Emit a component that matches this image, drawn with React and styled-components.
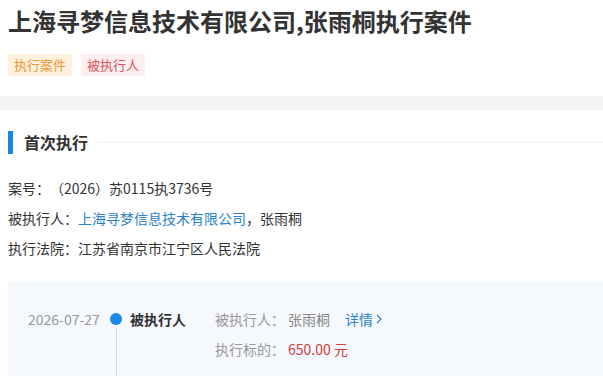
import React from "react";
import styled, { createGlobalStyle } from "styled-components";

const GlobalStyle = createGlobalStyle`
  body {
    margin: 0;
    background: #fff;
    font-family: "Noto Sans CJK SC", "Noto Sans", sans-serif;
    color: #333;
    text-spacing-trim: space-all;
  }
`;

const Header = styled.div`
  padding: 4px 0 20px 8px;
`;

const Title = styled.h1`
  margin: 0;
  font-size: 24px;
  line-height: 34px;
  font-weight: 700;
  color: #333;
`;

const Tags = styled.div`
  display: flex;
  gap: 9px;
  margin-top: 16px;
`;

const Tag = styled.span`
  display: inline-block;
  padding: 0 6px;
  height: 22px;
  line-height: 22px;
  font-size: 13px;
  border-radius: 2px;
  background: ${(p) => (p.$tone === "orange" ? "#fff2de" : "#fdeef0")};
  color: ${(p) => (p.$tone === "orange" ? "#ee9534" : "#df5059")};
`;

const Band = styled.div`
  height: 14px;
  background: #f5f5f5;
`;

const Section = styled.div`
  padding: 20px 0 0 8px;
`;

const SectionHead = styled.div`
  display: flex;
  align-items: center;
  height: 24px;
`;

const Bar = styled.span`
  width: 5px;
  height: 23px;
  background: #1a87e3;
  margin-right: 11px;
`;

const SectionTitle = styled.h2`
  margin: 0;
  font-size: 16px;
  font-weight: 700;
  color: #333;
  white-space: nowrap;
`;

const Rule = styled.span`
  flex: 1;
  height: 1px;
  background: #ececec;
  margin-left: 10px;
`;

const Info = styled.div`
  margin-top: 19px;
`;

const InfoRow = styled.div`
  font-size: 14px;
  line-height: 30px;
  color: #333;
`;

const Link = styled.a`
  color: #2a7fcf;
  text-decoration: none;
`;

const Timeline = styled.div`
  margin-top: 19px;
  background: #f5f8fc;
  padding: 22px 0 0 20px;
  height: 72px;
  display: flex;
  font-size: 14px;
  line-height: 30px;
`;

const Date = styled.div`
  color: #999;
  width: 82px;
`;

const Axis = styled.div`
  position: relative;
  width: 12px;
  margin-right: 8px;

  &::before {
    content: "";
    position: absolute;
    left: 0;
    top: 9px;
    width: 12px;
    height: 12px;
    border-radius: 50%;
    background: #1a87e6;
  }

  &::after {
    content: "";
    position: absolute;
    left: 5.5px;
    top: 24px;
    bottom: 0;
    width: 1px;
    background: #d8dce2;
  }
`;

const EventName = styled.div`
  font-weight: 700;
  color: #333;
  width: 85px;
`;

const Details = styled.div`
  color: #999;
`;

const DetailRow = styled.div`
  display: flex;
`;

const Label = styled.span`
  width: 73px;
`;

const Value = styled.span`
  color: ${(p) => (p.$red ? "#d8383f" : "#888")};
`;

const More = styled.a`
  color: #2a7fcf;
  margin-left: 15px;
  text-decoration: none;
  display: inline-flex;
  align-items: center;
  gap: 2px;
`;

export default function App() {
  return (
    <>
      <GlobalStyle />
      <Header>
        <Title>上海寻梦信息技术有限公司,张雨桐执行案件</Title>
        <Tags>
          <Tag $tone="orange">执行案件</Tag>
          <Tag $tone="red">被执行人</Tag>
        </Tags>
      </Header>
      <Band />
      <Section>
        <SectionHead>
          <Bar />
          <SectionTitle>首次执行</SectionTitle>
          <Rule />
        </SectionHead>
        <Info>
          <InfoRow>案号：（2026）苏0115执3736号</InfoRow>
          <InfoRow>
            被执行人：<Link href="#">上海寻梦信息技术有限公司</Link>，张雨桐
          </InfoRow>
          <InfoRow>执行法院：江苏省南京市江宁区人民法院</InfoRow>
        </Info>
        <Timeline>
          <Date>2026-07-27</Date>
          <Axis />
          <EventName>被执行人</EventName>
          <Details>
            <DetailRow>
              <Label>被执行人：</Label>
              <Value>张雨桐</Value>
              <More href="#">
                详情
                <svg width="8" height="10" viewBox="0 0 8 10">
                  <path d="M2 1l4 4-4 4" fill="none" stroke="#2a7fcf" strokeWidth="1.2" />
                </svg>
              </More>
            </DetailRow>
            <DetailRow>
              <Label>执行标的：</Label>
              <Value $red>650.00 元</Value>
            </DetailRow>
          </Details>
        </Timeline>
      </Section>
    </>
  );
}
